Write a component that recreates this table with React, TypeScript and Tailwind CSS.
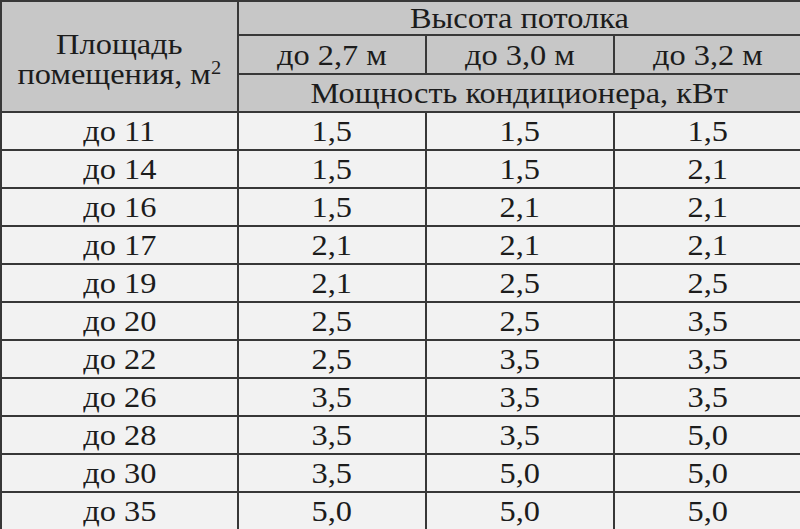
import React from "react"

const rows: [string, string, string, string][] = [
  ["до 11", "1,5", "1,5", "1,5"],
  ["до 14", "1,5", "1,5", "2,1"],
  ["до 16", "1,5", "2,1", "2,1"],
  ["до 17", "2,1", "2,1", "2,1"],
  ["до 19", "2,1", "2,5", "2,5"],
  ["до 20", "2,5", "2,5", "3,5"],
  ["до 22", "2,5", "3,5", "3,5"],
  ["до 26", "3,5", "3,5", "3,5"],
  ["до 28", "3,5", "3,5", "5,0"],
  ["до 30", "3,5", "5,0", "5,0"],
  ["до 35", "5,0", "5,0", "5,0"],
]

const head = "border-2 border-[#383838] bg-[#c7c7c7] p-0 text-center font-normal leading-none"
const cell = "border-2 border-[#383838] bg-[#f2f2f2] p-0 text-center leading-none"

// text in the source picture is slightly stretched horizontally
function T({ children }: { children: React.ReactNode }) {
  return <span className="inline-block scale-x-[1.08]">{children}</span>
}

export default function App() {
  return (
    <div className="h-[529px] w-[800px] overflow-hidden bg-white font-['Liberation_Serif','Times_New_Roman',serif]">
      <table className="h-[529px] w-[800px] table-fixed border-collapse text-[30px] text-[#1c1c1c]">
        <colgroup>
          <col className="w-[237px]" />
          <col className="w-[188px]" />
          <col className="w-[188px]" />
          <col className="w-[187px]" />
        </colgroup>
        <thead>
          <tr className="h-[34px]">
            <th rowSpan={3} className={head + " leading-[34px]"}>
              <span className="inline-block scale-x-[1.08] pt-1">
                Площадь
                <br />
                помещения, м<sup className="text-[19px]">2</sup>
              </span>
            </th>
            <th colSpan={3} className={head}>
              <T>Высота потолка</T>
            </th>
          </tr>
          <tr className="h-[39px]">
            <th className={head}><T>до 2,7 м</T></th>
            <th className={head}><T>до 3,0 м</T></th>
            <th className={head}><T>до 3,2 м</T></th>
          </tr>
          <tr className="h-[38px]">
            <th colSpan={3} className={head}>
              <T>Мощность кондиционера, кВт</T>
            </th>
          </tr>
        </thead>
        <tbody>
          {rows.map((r) => (
            <tr key={r[0]} className="h-[38px]">
              {r.map((v, i) => (
                <td key={i} className={cell}>
                  <T>{v}</T>
                </td>
              ))}
            </tr>
          ))}
        </tbody>
      </table>
    </div>
  )
}
